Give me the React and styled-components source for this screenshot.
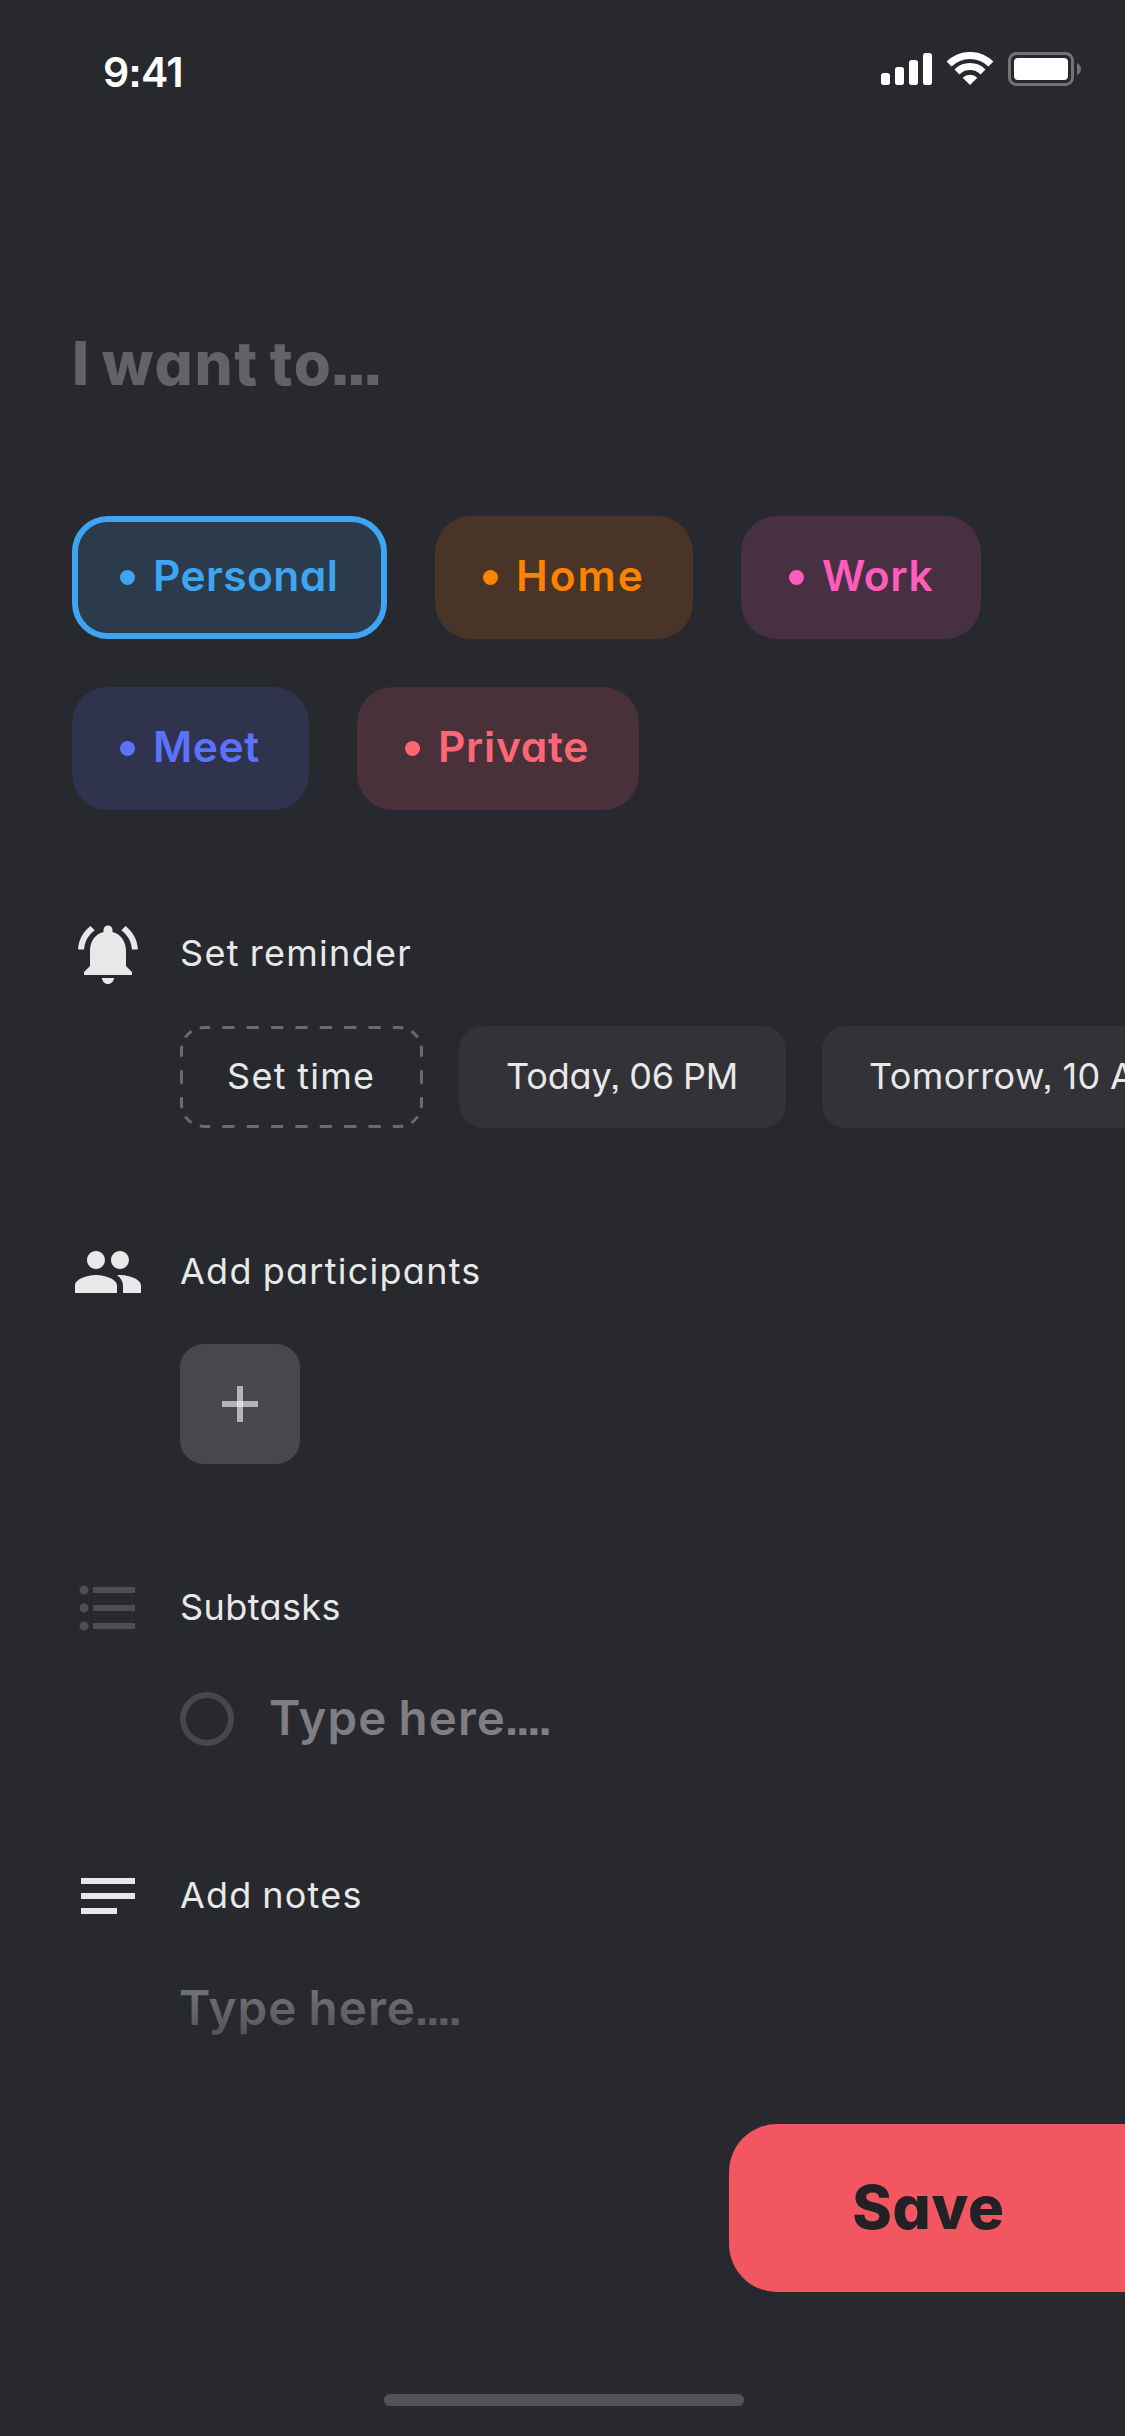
import React from 'react';
import styled, { createGlobalStyle } from 'styled-components';

const GlobalStyle = createGlobalStyle`
  *, *::before, *::after { box-sizing: border-box; }
  body { margin: 0; background: #28292e; }
  button { border: 0; padding: 0; margin: 0; background: none; font: inherit; color: inherit; }
`;

const Screen = styled.div`
  width: 1125px;
  height: 2436px;
  display: flex;
  flex-direction: column;
  overflow: hidden;
  background: #28292e;
  color: #e8e8e8;
  font-family: Inter, 'Liberation Sans', sans-serif;
  font-feature-settings: 'cv11', 'ss07';
`;

const StatusBar = styled.header`
  height: 132px;
  flex: none;
  display: flex;
  justify-content: space-between;
  padding: 0 44px 0 103px;
`;

const Clock = styled.time`
  padding-top: 47px;
  font-size: 41px;
  line-height: 50px;
  font-weight: 570;
  letter-spacing: -0.7px;
  color: #fff;
`;

const StatusIcons = styled.svg`
  display: block;
  width: 200px;
  height: 34px;
  margin-top: 52px;
`;

const Label = styled.span`
  display: block;
  white-space: pre;
  letter-spacing: ${(p) => p.$track || 0}px;
`;

const Dots = styled.span`
  margin-left: ${(p) => p.$pull || 0}px;
  letter-spacing: ${(p) => p.$track}px;
`;

const TitleInput = styled.h1`
  flex: none;
  margin: 187px 72px 108px;
  font-size: 60px;
  line-height: 89px;
  font-weight: 800;
  word-spacing: -4px;
  color: #636267;
`;

const ChipList = styled.div`
  flex: none;
  display: flex;
  flex-wrap: wrap;
  gap: 48px;
  padding: 0 72px;
`;

const Chip = styled.button`
  width: ${(p) => p.$width}px;
  height: 123px;
  display: flex;
  align-items: center;
  gap: 18px;
  padding: 0 0 0 ${(p) => (p.$selected ? 42 : 48)}px;
  border: ${(p) => (p.$selected ? `6px solid ${p.$color}` : '0')};
  border-radius: 36px;
  background: ${(p) => p.$color}26;
  background-clip: ${(p) => (p.$selected ? 'padding-box' : 'border-box')};
  color: ${(p) => p.$color};
  font-size: 42.5px;
  line-height: 60px;
  font-weight: 640;

  &::before {
    content: '';
    flex: none;
    width: 15px;
    height: 15px;
    border-radius: 50%;
    background: currentColor;
  }

  ${Label} { padding-bottom: 4px; }
`;

const Section = styled.section`
  flex: none;
  display: grid;
  grid-template-columns: 72px 1fr;
  column-gap: 36px;
  row-gap: ${(p) => p.$gap}px;
  padding: ${(p) => p.$top}px 0 0 72px;
`;

const Icon = styled.svg`
  display: block;
  width: 72px;
  height: 72px;
  fill: ${(p) => p.$color || '#e8e8e8'};
`;

const Heading = styled.h2`
  margin: 0;
  font-size: 36px;
  line-height: 70px;
  font-weight: 400;
  word-spacing: -1.5px;
`;

const Body = styled.div`
  grid-column: 2;
  display: flex;
  align-items: center;
  height: ${(p) => p.$height}px;
  gap: 36px;
`;

const TimeChip = styled.button`
  position: relative;
  flex: none;
  width: ${(p) => p.$width}px;
  height: 102px;
  padding: 0 0 2px 47px;
  text-align: left;
  border-radius: 24px;
  background: ${(p) => (p.$dashed ? 'transparent' : '#323237')};
  font-size: 36px;
  line-height: 98px;
  word-spacing: -1px;
`;

const DashedOutline = styled.svg`
  position: absolute;
  inset: 0;
  width: 243px;
  height: 102px;
  fill: none;
  stroke: #6b6a6f;
  stroke-width: 3;
`;

const AddButton = styled.button`
  width: 120px;
  height: 120px;
  display: grid;
  place-items: center;
  border-radius: 24px;
  background: #48474c;
`;

const PlusIcon = styled.svg`
  display: block;
  width: 36px;
  height: 36px;
  fill: #fff;
  fill-opacity: 0.6;
`;

const Radio = styled.span`
  flex: none;
  width: 54px;
  height: 54px;
  border: 6px solid #48474c;
  border-radius: 50%;
`;

const Placeholder = styled.p`
  margin: 0 0 0 -1px;
  padding-bottom: ${(p) => p.$lift || 0}px;
  font-size: 47.5px;
  line-height: 54px;
  font-weight: 640;
  word-spacing: -2px;
  color: #7f7e83;
`;

const Footer = styled.footer`
  position: relative;
  flex: 1;
  display: flex;
  flex-direction: column;
  align-items: flex-end;
  margin-top: -72px;
  padding-top: 161px;
  background: linear-gradient(to bottom, #28292e00 8px, #28292e 136px);
`;

const SaveButton = styled.button`
  width: 396px;
  height: 168px;
  padding: 0 0 2px 3px;
  border-radius: 48px 0 0 48px;
  background: #f25661;
  color: #222126;
  font-size: 60px;
  line-height: 90px;
  font-weight: 800;
  text-align: center;
`;

const HomeIndicator = styled.div`
  align-self: center;
  width: 360px;
  height: 12px;
  margin: 102px 0 0 3px;
  border-radius: 6px;
  background: #545358;
`;

const categories = [
  { name: 'Personal', color: '#3fa5f2', width: 315, track: 0.4, selected: true },
  { name: 'Home', color: '#ff8200', width: 258, track: 2 },
  { name: 'Work', color: '#ff5cbc', width: 240, track: 0.6 },
  { name: 'Meet', color: '#5a72ff', width: 237, track: 0.6 },
  { name: 'Private', color: '#ff6675', width: 282, track: 0.7 },
];

const paths = {
  bell: 'M7.58 4.08L6.15 2.65C3.75 4.48 2.17 7.3 2.03 10.5h2c.15-2.65 1.51-4.97 3.55-6.42zm12.39 6.42h2c-.15-3.2-1.73-6.02-4.12-7.85l-1.42 1.43c2.02 1.45 3.39 3.77 3.54 6.42zM18 11c0-3.07-1.64-5.64-4.5-6.32V4c0-.83-.67-1.5-1.5-1.5s-1.5.67-1.5 1.5v.68C7.63 5.36 6 7.92 6 11v5l-2 2v1h16v-1l-2-2v-5zm-6 11c.14 0 .27-.01.4-.04.65-.14 1.18-.58 1.44-1.18.1-.24.15-.5.15-.78h-4c.01 1.1.9 2 2.01 2z',
  people: 'M16 11c1.66 0 2.99-1.34 2.99-3S17.66 5 16 5c-1.66 0-3 1.34-3 3s1.34 3 3 3zm-8 0c1.66 0 2.99-1.34 2.99-3S9.66 5 8 5C6.34 5 5 6.34 5 8s1.34 3 3 3zm0 2c-2.33 0-7 1.17-7 3.5V19h14v-2.5c0-2.33-4.67-3.5-7-3.5zm8 0c-.29 0-.62.02-.97.05 1.16.84 1.97 1.97 1.97 3.45V19h6v-2.5c0-2.33-4.67-3.5-7-3.5z',
  list: 'M4 10.5c-.83 0-1.5.67-1.5 1.5s.67 1.5 1.5 1.5 1.5-.67 1.5-1.5-.67-1.5-1.5-1.5zm0-6c-.83 0-1.5.67-1.5 1.5S3.17 7.5 4 7.5 5.5 6.83 5.5 6 4.83 4.5 4 4.5zm0 12c-.83 0-1.5.68-1.5 1.5s.68 1.5 1.5 1.5 1.5-.68 1.5-1.5-.67-1.5-1.5-1.5zM7 19h14v-2H7v2zm0-6h14v-2H7v2zm0-8v2h14V5H7z',
  notes: 'M3 18h12v-2H3v2zM3 6v2h18V6H3zm0 7h18v-2H3v2z',
};

/* Each side and corner carries its own evenly spaced run of dashes. */
const outline = [
  ['M24 1.5H219', 8],
  ['M219 1.5A22.5 22.5 0 0 1 241.5 24', 2],
  ['M241.5 24V78', 2],
  ['M241.5 78A22.5 22.5 0 0 1 219 100.5', 2],
  ['M219 100.5H24', 8],
  ['M24 100.5A22.5 22.5 0 0 1 1.5 78', 2],
  ['M1.5 78V24', 2],
  ['M1.5 24A22.5 22.5 0 0 1 24 1.5', 2],
];

function MaterialIcon({ name, color }) {
  return (
    <Icon viewBox="0 0 24 24" $color={color} aria-hidden="true">
      <path d={paths[name]} />
    </Icon>
  );
}

function Status() {
  return (
    <StatusBar>
      <Clock>9:41</Clock>
      <StatusIcons viewBox="0 0 200 34" fill="#fff" aria-hidden="true">
        <rect x="0" y="21" width="9" height="12" rx="2.8" />
        <rect x="14" y="15" width="9" height="18" rx="2.8" />
        <rect x="28" y="8" width="9" height="25" rx="2.8" />
        <rect x="42" y="1" width="9" height="32" rx="2.8" />
        <g fill="none" stroke="#fff">
          <path strokeWidth="7" d="M68.1 12.1A29.6 29.6 0 0 1 109.9 12.1" />
          <path strokeWidth="7" d="M76 20A18.4 18.4 0 0 1 102 20" />
        </g>
        <path d="M89 33L81.7 25.7A10.5 10.5 0 0 1 96.3 25.7Z" />
        <rect x="128.5" y="1.5" width="63" height="31" rx="7" fill="none" stroke="#737378" strokeWidth="3" />
        <rect x="133" y="6" width="54" height="22" rx="4" />
        <path d="M196 11c2.4 1.2 4 3.4 4 6s-1.6 4.8-4 6z" fill="#737378" />
      </StatusIcons>
    </StatusBar>
  );
}

export default function App() {
  return (
    <Screen>
      <GlobalStyle />
      <Status />
      <TitleInput>
        <Label $track={1.7}>I want to<Dots $track={-4.8} $pull={-3}>...</Dots></Label>
      </TitleInput>
      <ChipList>
        {categories.map((c) => (
          <Chip key={c.name} $color={c.color} $width={c.width} $selected={c.selected}>
            <Label $track={c.track}>{c.name}</Label>
          </Chip>
        ))}
      </ChipList>

      <Section $top={108} $gap={36}>
        <MaterialIcon name="bell" />
        <Heading><Label $track={1.3}>Set reminder</Label></Heading>
        <Body $height={102}>
          <TimeChip $width={243} $dashed>
            <DashedOutline viewBox="0 0 243 102" aria-hidden="true">
              {outline.map(([d, n]) => (
                <path key={d} d={d} pathLength={n * 2} strokeDasharray="1 1" strokeDashoffset="0.5" />
              ))}
            </DashedOutline>
            <Label $track={1.3}>Set time</Label>
          </TimeChip>
          <TimeChip $width={327}><Label $track={-0.15}>Today, 06 PM</Label></TimeChip>
          <TimeChip $width={378}><Label $track={0.4}>Tomorrow, 10 AM</Label></TimeChip>
        </Body>
      </Section>

      <Section $top={108} $gap={36}>
        <MaterialIcon name="people" />
        <Heading><Label $track={1.27}>Add participants</Label></Heading>
        <Body $height={120}>
          <AddButton aria-label="Add participant">
            <PlusIcon viewBox="0 0 36 36">
              <rect x="15" width="6" height="36" />
              <rect y="15" width="36" height="6" />
            </PlusIcon>
          </AddButton>
        </Body>
      </Section>

      <Section $top={108} $gap={48}>
        <MaterialIcon name="list" color="#4f4f50" />
        <Heading><Label $track={0.4}>Subtasks</Label></Heading>
        <Body $height={54}>
          <Radio />
          <Placeholder $lift={3}>
            <Label $track={1.1}>Type here<Dots $track={-4} $pull={-2}>....</Dots></Label>
          </Placeholder>
        </Body>
      </Section>

      <Section $top={114} $gap={49}>
        <MaterialIcon name="notes" />
        <Heading><Label $track={1.2}>Add notes</Label></Heading>
        <Body $height={54}>
          <Placeholder>
            <Label $track={1.1}>Type here<Dots $track={-4} $pull={-2}>....</Dots></Label>
          </Placeholder>
        </Body>
      </Section>

      <Footer>
        <SaveButton><Label $track={0.7}>Save</Label></SaveButton>
        <HomeIndicator />
      </Footer>
    </Screen>
  );
}
